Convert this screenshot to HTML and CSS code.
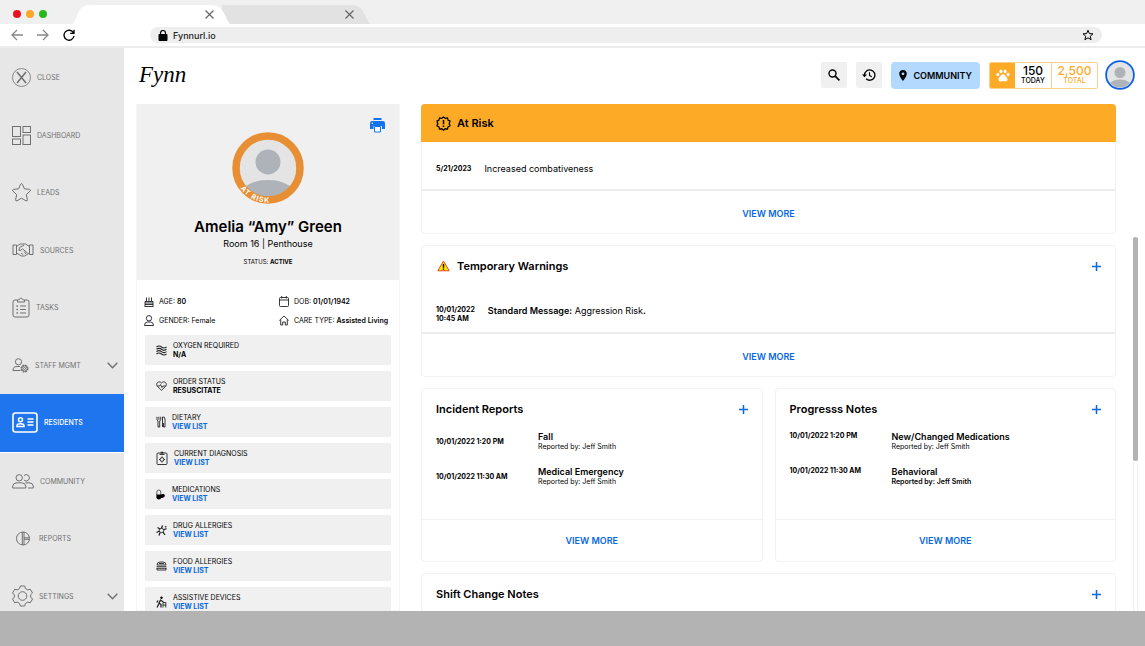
FILE: index.html
```html
<!DOCTYPE html>
<html lang="en">
<head>
    <meta charset="UTF-8">
    <meta name="viewport" content="width=device-width, initial-scale=1.0">
    <title>Fynn - Residents</title>
    <link rel="stylesheet" href="styles.css">
</head>
<body>
    <div class="tabs">
        <div class="dots">
            <span class="dot red"></span>
            <span class="dot orange"></span>
            <span class="dot green"></span>
        </div>
        <div class="tab tab-active">
            <button type="button" aria-label="Close tab"><svg width="9" height="9" viewBox="0 0 9 9"><path d="M.5.5l8 8M8.5.5l-8 8"/></svg></button>
        </div>
        <div class="tab tab-back">
            <button type="button" aria-label="Close tab"><svg width="9" height="9" viewBox="0 0 9 9"><path d="M.5.5l8 8M8.5.5l-8 8"/></svg></button>
        </div>
    </div>

    <div class="toolbar">
        <div class="nav-buttons">
            <button type="button" class="muted" aria-label="Back"><svg width="12" height="12" viewBox="0 0 12 12"><path d="M12 6H1M6 1L1 6l5 5"/></svg></button>
            <button type="button" class="muted" aria-label="Forward"><svg width="12" height="12" viewBox="0 0 12 12"><path d="M0 6h11M6 1l5 5-5 5"/></svg></button>
            <button type="button" aria-label="Reload"><svg width="12" height="12" viewBox="0 0 12 12"><path d="M10.3 3.6A5 5 0 1 0 11 7M11 .8v3.6H7.2"/></svg></button>
        </div>
        <div class="address">
            <svg width="10" height="11" viewBox="0 0 10 11"><rect x=".5" y="4" width="9" height="7" rx="1" fill="#000"/><path d="M2.5 5V3a2.5 2.5 0 0 1 5 0v2" fill="none" stroke="#000" stroke-width="1.2"/></svg>
            <input type="text" value="Fynnurl.io" aria-label="Address">
            <button type="button" aria-label="Bookmark"><svg width="12" height="12" viewBox="0 0 24 24"><path d="M12 2.5l2.8 6.6 7.2.6-5.500 4.700 1.700 7L12 17.600 5.800 21.400l1.700-7L2 9.700l7.200-.6z" stroke-width="2"/></svg></button>
        </div>
    </div>

    <div class="app">
        <nav class="sidebar">
            <a href="#" class="side-item">
                <svg width="19" height="19" viewBox="0 0 19 19"><circle cx="9.500" cy="9.500" r="9" stroke-width=".8"/><path d="M5 4l9 11M14 4L5 15" stroke-width="1.500"/></svg>
                Close
            </a>
            <a href="#" class="side-item">
                <svg width="19" height="19" viewBox="0 0 19 19"><rect x=".5" y=".5" width="8" height="10"/><rect x="11" y=".5" width="7.500" height="6"/><rect x=".5" y="13" width="8" height="5.500"/><rect x="11" y="9" width="7.500" height="9.500"/></svg>
                Dashboard
            </a>
            <a href="#" class="side-item">
                <svg width="19" height="19" viewBox="0 0 19 19"><path d="M8.600 1.200q.9-1.300 1.800 0l2 4.600 5.200.6q1.500.5.5 1.700l-3.800 3.500 1.100 5.200q0 1.500-1.400 1L9.500 15.200 5 17.800q-1.400.5-1.400-1l1.100-5.200L.9 8.100q-1-1.200.5-1.700l5.200-.6z"/></svg>
                Leads
            </a>
            <a href="#" class="side-item">
                <svg width="22" height="14" viewBox="0 0 22 14"><path d="M1 2h3.500v9.500H1zM17.500 2H21v9.500h-3.500zM4.500 3.500L8 1h5.500l4 2.500M4.500 10l5 3h3l5-3M12 2.200L7.500 4.500 7 7.500q2 .5 3.500-1.700l5 4.200M9 10l2 1.500M12 8.500l2 2.500"/></svg>
                Sources
            </a>
            <a href="#" class="side-item">
                <svg width="18" height="21" viewBox="0 0 18 21"><path d="M5.500 3H3Q1 3 1 5v13q0 2 2 2h12q2 0 2-2V5q0-2-2-2h-2.500M5.500 5V3l2-.5Q9-.8 10.500 2.500l2 .5v2zM8 9h6M8 12.500h6M8 16h6"/><path d="M4.500 9h1.500M4.500 12.500h1.500M4.500 16h1.500" stroke-width="1.500"/></svg>
                Tasks
            </a>
            <a href="#" class="side-item">
                <svg width="17" height="15" viewBox="0 0 17 15"><circle cx="6.500" cy="3.800" r="3.100"/><path d="M8.500 12.500H1Q.8 8.500 5 8.500h3"/><circle cx="12.500" cy="10.500" r="3.300" stroke-width="1.400" stroke-dasharray="1.700 .9"/><circle cx="12.500" cy="10.500" r="2.600"/><circle cx="12.500" cy="10.500" r="1"/></svg>
                Staff Mgmt
                <svg class="chevron" width="11" height="7" viewBox="0 0 11 7"><path d="M.7.8l4.800 5 4.800-5"/></svg>
            </a>
            <a href="#" class="side-item active">
                <svg width="26" height="21" viewBox="0 0 26 21"><rect x="1" y="1" width="24" height="19" rx="2.500" stroke-width="1.600"/><circle cx="8.500" cy="7.800" r="2" stroke-width="1.500"/><path d="M5 14.500v-1q.3-1.800 3.500-1.800t3.500 1.800v1z" stroke-width="1.500"/><path d="M15.500 7h6M15.500 10h6M15.500 13h6" stroke-width="1.300"/></svg>
                Residents
            </a>
            <a href="#" class="side-item">
                <svg width="22" height="15" viewBox="0 0 22 15"><circle cx="7.200" cy="3.800" r="3.200"/><path d="M12 1.500a3.200 3.200 0 1 1 0 4.600M.7 14v-2Q1 8.800 5 8.800h4.500q4 0 4.300 3.200v2zM13.500 8.800H17q4 0 4.300 3.200v2H16"/></svg>
                Community
            </a>
            <a href="#" class="side-item">
                <svg width="21" height="15" viewBox="0 0 21 15"><circle cx="11" cy="7.500" r="6.500"/><path d="M10.300 1v13M12 1v13M12 6.800h5.500M12 8.300h5.500"/></svg>
                Reports
            </a>
            <a href="#" class="side-item">
                <svg width="21" height="22" viewBox="0 0 21 22"><path d="M8.300 1h4.400l.7 2.600 2.300 1.300 2.600-.7 2.200 3.800-1.900 1.900v2.200l1.900 1.900-2.200 3.800-2.600-.7-2.300 1.300-.7 2.600H8.300l-.7-2.600-2.300-1.300-2.600.7L.5 14l1.900-1.900V9.900L.5 8l2.200-3.800 2.600.7 2.300-1.300z" stroke-linejoin="round"/><circle cx="10.500" cy="11" r="4.300"/></svg>
                Settings
                <svg class="chevron" width="11" height="7" viewBox="0 0 11 7"><path d="M.7.8l4.800 5 4.800-5"/></svg>
            </a>
        </nav>

        <main class="main">
            <header class="header">
                <a href="#" class="logo">Fynn</a>
                <button type="button" class="icon-btn" aria-label="Search"><svg width="12" height="12" viewBox="0 0 12 12"><circle cx="4.500" cy="4.500" r="3.500" stroke-width="1.400"/><path d="M7.200 7.200l4.200 4.200" stroke-width="1.700"/></svg></button>
                <button type="button" class="icon-btn" aria-label="History"><svg width="14" height="12" viewBox="0 0 14 12"><path d="M2.500 6a5.200 5.200 0 1 1 1.600 3.800" stroke-width="1.300"/><path d="M0 5.500h5L2.500 8.200z" fill="#000" stroke="none"/><path d="M7.500 3.200v3.200l2.300 1.300" stroke-width="1.100"/></svg></button>
                <button type="button" class="community-btn">
                    <svg width="8" height="11" viewBox="0 0 8 11"><path d="M4 0a3.800 3.800 0 0 1 3.800 3.800C7.800 6.500 4 11 4 11S.2 6.500.2 3.800A3.800 3.800 0 0 1 4 0zm0 2.400a1.400 1.400 0 1 0 0 2.800 1.400 1.400 0 0 0 0-2.800z" fill="#000"/></svg>
                    Community
                </button>
                <div class="points">
                    <span class="paw"><svg width="14" height="13" viewBox="0 0 14 13"><ellipse cx="1.900" cy="5.500" rx="1.500" ry="1.700"/><ellipse cx="4.900" cy="2.300" rx="1.500" ry="1.900"/><ellipse cx="9.100" cy="2.300" rx="1.500" ry="1.900"/><ellipse cx="12.100" cy="5.500" rx="1.500" ry="1.700"/><path d="M7 5.300c1.800 0 2.400 1.600 3.600 2.900 1.500 1.600 1.100 4.300-1.100 4.300-1 0-1.600-.4-2.500-.4s-1.500.4-2.500.4c-2.200 0-2.600-2.700-1.100-4.300C4.600 6.900 5.200 5.300 7 5.300z"/></svg></span>
                    <span class="count">150<small>Today</small></span>
                    <span class="count total">2,500<small>Total</small></span>
                </div>
                <a href="#" class="user" aria-label="Profile">
                    <svg width="30" height="30" viewBox="0 0 30 30"><clipPath id="userClip"><circle cx="15" cy="15" r="12.500"/></clipPath><circle cx="15" cy="15" r="13.900" fill="#e4e4e4" stroke="#0f62e6" stroke-width="1.800"/><circle cx="15" cy="12.500" r="5.500" fill="#adb3b8"/><ellipse cx="15" cy="27" rx="12" ry="7.500" fill="#adb3b8" clip-path="url(#userClip)"/></svg>
                </a>
            </header>

            <div class="content">
                <section class="profile">
                    <div class="profile-top">
                        <button type="button" class="print" aria-label="Print"><svg width="15" height="15" viewBox="0 0 15 15"><path d="M3.500 0h8v2h-8zM2 3h11q2 0 2 2v6h-3V8H3.500v3H0V5q0-2 2-2z" fill="#1473f0"/><path d="M4.500 8.500h6v5.500h-6z" fill="#fff" stroke="#1473f0"/><circle cx="2.300" cy="5.300" r=".8" fill="#fff"/></svg></button>
                        <svg class="avatar" width="72" height="72" viewBox="0 0 72 72">
                            <defs>
                                <clipPath id="faceClip"><circle cx="36" cy="36" r="29"/></clipPath>
                                <path id="ringText" d="M1.500 36a34.500 34.500 0 0 0 69 0"/>
                            </defs>
                            <circle cx="36" cy="36" r="29" fill="#e4e4e4"/>
                            <circle cx="36" cy="30" r="12.500" fill="#adb3b8"/>
                            <ellipse cx="36" cy="66" rx="29" ry="18" fill="#adb3b8" clip-path="url(#faceClip)"/>
                            <circle cx="36" cy="36" r="32" fill="none" stroke="#e88f35" stroke-width="7.500"/>
                            <text class="ring-label"><textPath href="#ringText" startOffset="22">AT RISK</textPath></text>
                        </svg>
                        <h1>Amelia “Amy” Green</h1>
                        <p class="room">Room 16 | Penthouse</p>
                        <p class="status">STATUS: <b>ACTIVE</b></p>
                    </div>

                    <div class="facts">
                        <div class="fact"><svg width="10" height="11" viewBox="0 0 10 11"><path d="M.5 10.500h9M1 8.500h8M1 10V5.500h8V10M2.500 5V1.500M5 5V1.500M7.500 5V1.500M1 7h8"/></svg><span>AGE: <b>80</b></span></div>
                        <div class="fact"><svg width="10" height="11" viewBox="0 0 10 11"><rect x=".5" y="1.500" width="9" height="9" rx="1"/><path d="M.5 4h9M2.700 0v2.500M7.300 0v2.500"/></svg><span>DOB: <b>01/01/1942</b></span></div>
                        <div class="fact"><svg width="10" height="11" viewBox="0 0 10 11"><circle cx="5" cy="3.300" r="2.700"/><path d="M.5 10.500q0-3.500 3-3.500h3q3 0 3 3.500z"/></svg><span>GENDER: Female</span></div>
                        <div class="fact"><svg width="10" height="11" viewBox="0 0 10 11"><path d="M.3 5.500L5 1l4.700 4.500M1.700 4.500v5.500h2V7h2.600v3h2V4.500"/></svg><span>CARE TYPE: <b>Assisted Living</b></span></div>
                    </div>

                    <ul class="details">
                        <li><svg width="11" height="11" viewBox="0 0 11 11"><path d="M.5 2q2.500-2 5 0t5 0M.5 4.300q2.500-2 5 0t5 0M.5 6.600q2.500-2 5 0t5 0M.5 9q2.500-2 5 0t5 0" stroke-width="1.200"/></svg><div>Oxygen Required<b>N/A</b></div></li>
                        <li><svg width="11" height="10" viewBox="0 0 11 10"><path d="M5.500 9.300L1.300 5.300C-.8 2.500 2.800-.9 5.500 2 8.200-.9 11.800 2.500 9.700 5.300zM1.500 5h2l1-1.500 1.500 3 1-1.500h2.500"/></svg><div>Order Status<b>Resuscitate</b></div></li>
                        <li><svg width="10" height="12" viewBox="0 0 10 12"><path d="M1 .8v3l1 1.200v6h1.700V5l1-1.200v-3M2.900.8v3M6.500 11V1q2.500-.5 2.500 2v8H7.500V7"/></svg><div>Dietary<a href="#">View List</a></div></li>
                        <li><svg width="12" height="14" viewBox="0 0 12 14"><rect x="1" y="2" width="10" height="11.500" rx="1"/><path d="M3.500 3.500h5M6 .5v3M4.500 1.500h3"/><circle cx="6" cy="8.500" r="1.900"/><path d="M6 5.500v1M6 10.500v1M3 8.500h1M8 8.500h1"/></svg><div>Current Diagnosis<a href="#">View List</a></div></li>
                        <li><svg width="10" height="11" viewBox="0 0 10 11"><path d="M.8 6V3a2 2 0 0 1 4 0v3" stroke-width=".7"/><path d="M.4 5.500h4.800v2.700a2.400 2.400 0 0 1-4.800 0z" fill="#000" stroke="none"/><ellipse cx="6.300" cy="7" rx="2.600" ry="1.900" fill="#000" stroke="none" transform="rotate(-15 6.300 7)"/></svg><div>Medications<a href="#">View List</a></div></li>
                        <li><svg width="11" height="11" viewBox="0 0 11 11"><circle cx="5.500" cy="5.500" r="2.200"/><path d="M5.500 3.500l1-3M7.500 5l3-1.500M7 7l2 3M4 7.500L3 10.500M3.500 6L.5 7.500M4 4L1.500 2.500" stroke-width="1.300"/><circle cx="9.700" cy="1.800" r=".5"/></svg><div>Drug Allergies<a href="#">View List</a></div></li>
                        <li><svg width="11" height="10" viewBox="0 0 11 10"><path d="M1 4q0-3 3-3h3q3 0 3 3zM.5 5.700h10M.8 7.300h9.400M1 9h9V7M1 7v2M3 2.500h5"/></svg><div>Food Allergies<a href="#">View List</a></div></li>
                        <li><svg width="11" height="12" viewBox="0 0 11 12"><circle cx="5.500" cy="1.700" r="1.200" fill="#000" stroke="none"/><path d="M4.800 3.500L3 7l2 1.500v3M3 7.500L1 11.500M2 4.500L.8 6.500M5 4.500L7.500 6" stroke-width="1.300"/><path d="M7 11.500V6.500h2.800v5M7 9h3"/></svg><div>Assistive Devices<a href="#">View List</a></div></li>
                    </ul>
                </section>

                <div class="cards">
                    <section class="card card-risk">
                        <div class="card-head risk">
                            <svg width="15" height="15" viewBox="0 0 15 15"><path d="M7.500 1l1.800 1.300 2.200-.4.500 2.200 2 1-.8 2.400.8 2.300-2 1.100-.5 2.200-2.200-.3-1.800 1.300-1.800-1.300-2.200.3-.5-2.200-2-1.100.8-2.300L1 5.100l2-1 .5-2.200 2.200.4z" fill="none" stroke="#000" stroke-width="1.300"/><path d="M7.500 4v4.200M7.500 9.500V11" stroke="#000" stroke-width="1.500"/></svg>
                            <h2>At Risk</h2>
                        </div>
                        <div class="risk-row">
                            <time>5/21/2023</time>
                            <p>Increased combativeness</p>
                        </div>
                        <div class="card-foot thick"><a href="#">View More</a></div>
                    </section>

                    <section class="card">
                        <div class="card-head">
                            <svg width="15" height="13" viewBox="0 0 15 13"><path d="M7.500 1L13.200 10.800H1.800z" fill="#ffe600" stroke="#e5482d" stroke-width="1" stroke-linejoin="round"/><path d="M7.500 4v3.700M7.500 8.500v1.300" stroke="#000" stroke-width="1.400"/></svg>
                            <h2>Temporary Warnings</h2>
                            <button type="button" class="add" aria-label="Add warning"><svg width="9" height="9" viewBox="0 0 9 9"><path d="M4.500 0v9M0 4.500h9"/></svg></button>
                        </div>
                        <div class="warning-row">
                            <time>10/01/2022<br>10:45 AM</time>
                            <p><b>Standard Message:</b> Aggression Risk<b>.</b></p>
                        </div>
                        <div class="card-foot thick"><a href="#">View More</a></div>
                    </section>

                    <div class="card-pair">
                        <section class="card">
                            <div class="card-head">
                                <h2>Incident Reports</h2>
                                <button type="button" class="add" aria-label="Add incident report"><svg width="9" height="9" viewBox="0 0 9 9"><path d="M4.500 0v9M0 4.500h9"/></svg></button>
                            </div>
                            <div class="entries centered">
                                <div class="entry">
                                    <time>10/01/2022 1:20 PM</time>
                                    <div><h3>Fall</h3><p>Reported by: Jeff Smith</p></div>
                                </div>
                                <div class="entry">
                                    <time>10/01/2022 11:30 AM</time>
                                    <div><h3>Medical Emergency</h3><p>Reported by: Jeff Smith</p></div>
                                </div>
                            </div>
                            <div class="card-foot"><a href="#">View More</a></div>
                        </section>

                        <section class="card">
                            <div class="card-head">
                                <h2>Progresss Notes</h2>
                                <button type="button" class="add" aria-label="Add progress note"><svg width="9" height="9" viewBox="0 0 9 9"><path d="M4.500 0v9M0 4.500h9"/></svg></button>
                            </div>
                            <div class="entries">
                                <div class="entry">
                                    <time>10/01/2022 1:20 PM</time>
                                    <div><h3>New/Changed Medications</h3><p>Reported by: Jeff Smith</p></div>
                                </div>
                                <div class="entry">
                                    <time>10/01/2022 11:30 AM</time>
                                    <div><h3>Behavioral</h3><p><b>Reported by: Jeff Smith</b></p></div>
                                </div>
                            </div>
                            <div class="card-foot"><a href="#">View More</a></div>
                        </section>
                    </div>

                    <section class="card">
                        <div class="card-head">
                            <h2>Shift Change Notes</h2>
                            <button type="button" class="add" aria-label="Add shift change note"><svg width="9" height="9" viewBox="0 0 9 9"><path d="M4.500 0v9M0 4.500h9"/></svg></button>
                        </div>
                    </section>
                </div>

                <div class="scrollbar"><div class="thumb"></div></div>
            </div>
        </main>
    </div>

    <footer class="bottom-bar"></footer>
</body>
</html>
```
FILE: styles.css
```css
* {
    box-sizing: border-box;
}

body {
    margin: 0;
    height: 100vh;
    display: flex;
    flex-direction: column;
    overflow: hidden;
    font-family: Inter, "Liberation Sans", sans-serif;
    font-size: 9px;
    color: #000000;
    background: #ffffff;
}

h1, h2, h3, p, ul {
    margin: 0;
    padding: 0;
}

a {
    color: #0668e1;
    text-decoration: none;
}

button {
    display: flex;
    align-items: center;
    justify-content: center;
    padding: 0;
    border: none;
    background: none;
    font-family: inherit;
    color: inherit;
    cursor: pointer;
}

svg {
    flex-shrink: 0;
}

/* Browser frame */
.tabs {
    display: flex;
    align-items: flex-end;
    height: 24px;
    flex-shrink: 0;
    background: #f0f0f0;
}

.dots {
    display: flex;
    gap: 5px;
    width: 73px;
    padding: 0 0 6px 13px;
}

.dot {
    width: 8px;
    height: 8px;
    border-radius: 50%;
}

.red {
    background: #e8131d;
}

.orange {
    background: #fba823;
}

.green {
    background: #27b91b;
}

.tab {
    display: flex;
    align-items: center;
    justify-content: flex-end;
    height: 20px;
    padding-right: 16px;
}

.tab svg {
    fill: none;
    stroke: #666666;
    stroke-width: 1.2;
}

.tab-active {
    width: 157px;
    background: #ffffff;
    clip-path: path("M0 20C5 12 5 1 17 1H138C151 1 151 12 157 20Z");
    z-index: 1;
}

.tab-back {
    width: 148px;
    margin-left: -8px;
    background: #e2e2e2;
    clip-path: path("M0 1H129C142 1 142 12 148 20H0Z");
}

.toolbar {
    display: flex;
    align-items: center;
    height: 24px;
    flex-shrink: 0;
    padding: 0 43px 0 11px;
    border-bottom: 2px solid #ececec;
}

.nav-buttons {
    display: flex;
    gap: 14px;
    width: 139px;
}

.nav-buttons svg,
.address button svg {
    fill: none;
    stroke: #000000;
    stroke-width: 1.3;
}

.nav-buttons .muted svg {
    stroke: #888888;
}

.address {
    flex: 1;
    display: flex;
    align-items: center;
    gap: 5px;
    height: 16px;
    padding: 0 8px;
    border-radius: 8px;
    background: #eeeeee;
}

.address input {
    flex: 1;
    padding: 0;
    border: none;
    outline: none;
    background: none;
    font: 500 9px Inter, "Liberation Sans", sans-serif;
    color: #222222;
}

/* Sidebar */
.app {
    flex: 1;
    min-height: 0;
    display: flex;
    overflow: hidden;
}

.sidebar {
    display: flex;
    flex-direction: column;
    width: 124px;
    margin-bottom: -14px;
    padding-top: 1px;
    flex-shrink: 0;
    background: #e7e7e7;
}

.side-item {
    flex: 1;
    display: flex;
    align-items: center;
    gap: 6px;
    padding: 0 6px 0 12px;
    font-size: 7px;
    text-transform: uppercase;
    color: #707070;
}

.side-item svg {
    fill: none;
    stroke: #707070;
    stroke-width: 1;
}

.side-item .chevron {
    margin-left: auto;
    stroke-width: 1.4;
}

.side-item.active {
    background: #1f75ee;
    border-bottom: 1px solid #ffffff;
    font-weight: 500;
    color: #ffffff;
}

.side-item.active svg {
    stroke: #ffffff;
}

/* Header */
.main {
    flex: 1;
    min-width: 0;
    display: flex;
    flex-direction: column;
    padding: 0 7px 0 12px;
}

.header {
    display: flex;
    align-items: center;
    gap: 9px;
    height: 54px;
    flex-shrink: 0;
    margin-bottom: 2px;
    padding-right: 3px;
}

.logo {
    margin-right: auto;
    padding-left: 3px;
    font-family: "Liberation Serif", serif;
    font-style: italic;
    font-size: 23px;
    color: #000000;
}

.icon-btn {
    width: 26px;
    height: 26px;
    border-radius: 2px;
    background: #f0f0f0;
}

.icon-btn svg {
    fill: none;
    stroke: #000000;
}

.community-btn {
    gap: 6px;
    height: 27px;
    padding: 0 8px;
    border-radius: 4px;
    background: #b3d9ff;
    font-size: 9px;
    font-weight: 600;
    text-transform: uppercase;
}

.points {
    display: flex;
    height: 27px;
    border: 1px solid #fdd08a;
    border-radius: 2px;
    overflow: hidden;
}

.paw {
    display: flex;
    align-items: center;
    justify-content: center;
    width: 25px;
    background: #fdaa27;
}

.paw svg {
    fill: #ffffff;
}

.count {
    display: flex;
    flex-direction: column;
    align-items: center;
    justify-content: center;
    width: 36px;
    font-size: 12px;
    font-weight: 500;
    line-height: 12px;
}

.count small {
    font-size: 7px;
    line-height: 8px;
    text-transform: uppercase;
}

.total {
    width: 46px;
    border-left: 1px solid #fdd08a;
    color: #fdaa27;
}

.user {
    display: flex;
    margin-left: -2px;
}

/* Resident profile */
.content {
    flex: 1;
    min-height: 0;
    display: flex;
}

.profile {
    width: 264px;
    flex-shrink: 0;
    border: 1px solid #f5f5f5;
    border-top: none;
}

.profile-top {
    display: flex;
    flex-direction: column;
    align-items: center;
    height: 176px;
    padding: 14px;
    background: #f0f0f0;
}

.print {
    align-self: flex-end;
    height: 14px;
}

.ring-label {
    font-size: 7px;
    font-weight: 700;
    letter-spacing: 1px;
    fill: #ffffff;
}

.profile h1 {
    margin-top: 13px;
    font-size: 15px;
    font-weight: 600;
    line-height: 20px;
}

.room {
    font-size: 9px;
    line-height: 14px;
}

.status {
    margin-top: 6px;
    font-size: 6px;
    line-height: 10px;
}

.facts {
    display: grid;
    grid-template-columns: 135px auto;
    padding: 12px 7px 5px;
    font-size: 7px;
}

.fact {
    display: flex;
    align-items: center;
    gap: 5px;
    height: 19px;
    white-space: nowrap;
}

.fact b {
    font-weight: 600;
}

.fact svg,
.details svg {
    fill: none;
    stroke: #222222;
    stroke-width: 0.9;
}

.details {
    display: flex;
    flex-direction: column;
    gap: 6px;
    padding: 0 8px;
    list-style: none;
}

.details li {
    display: flex;
    align-items: center;
    gap: 6px;
    height: 30px;
    padding-left: 11px;
    background: #f0f0f0;
    font-size: 7px;
    line-height: 9px;
    text-transform: uppercase;
}

.details b,
.details a {
    display: block;
    font-weight: 700;
}

/* Cards */
.cards {
    flex: 1;
    min-width: 0;
    display: flex;
    flex-direction: column;
    gap: 11px;
    margin: 0 17px 0 21px;
}

.card {
    border: 1px solid #f2f2f2;
    border-radius: 4px;
    flex-shrink: 0;
}

.card-head {
    display: flex;
    align-items: center;
    gap: 6px;
    height: 40px;
    padding: 0 14px;
}

.card-head h2 {
    font-size: 11px;
    font-weight: 600;
}

.card-head.risk {
    height: 38px;
    margin: -1px;
    padding: 0 15px;
    border-radius: 4px 4px 0 0;
    background: #fdaa27;
}

.add {
    margin-left: auto;
}

.add svg {
    stroke: #0668e1;
    stroke-width: 1.5;
}

time {
    font-size: 7px;
    font-weight: 700;
    line-height: 9px;
}

.risk-row {
    display: flex;
    align-items: center;
    gap: 13px;
    height: 48px;
    padding: 6px 14px 0;
}

.warning-row {
    display: flex;
    gap: 13px;
    height: 46px;
    padding: 19px 14px 0;
}

.warning-row b {
    font-weight: 600;
}

.card-foot {
    display: flex;
    align-items: center;
    justify-content: center;
    height: 42px;
    border-top: 1px solid #f2f2f2;
    text-transform: uppercase;
}

.card-foot.thick {
    height: 44px;
    padding-top: 2px;
    border-top: 2px solid #ececec;
}

.card-foot a {
    font-weight: 600;
}

.card-pair {
    display: grid;
    grid-template-columns: 1fr 1fr;
    gap: 12px;
}

.entries {
    display: flex;
    flex-direction: column;
    gap: 15px;
    height: 90px;
    padding: 2px 14px 0;
}

.entry {
    display: grid;
    grid-template-columns: 102px auto;
    align-items: start;
}

.centered .entry {
    align-items: center;
}

.entry h3 {
    font-size: 9px;
    font-weight: 600;
    line-height: 11px;
}

.entry p {
    font-size: 7px;
    line-height: 9px;
}

.entry b {
    font-weight: 600;
}

/* Page scroll position */
.scrollbar {
    width: 5px;
    margin-top: 133px;
    border-left: 1px solid #f0f0f0;
    border-right: 1px solid #f0f0f0;
}

.thumb {
    width: 5px;
    height: 60%;
    margin-left: -1px;
    border-radius: 3px;
    background: #b3b3b3;
}

.bottom-bar {
    height: 35px;
    flex-shrink: 0;
    background: #b3b3b3;
}
```
